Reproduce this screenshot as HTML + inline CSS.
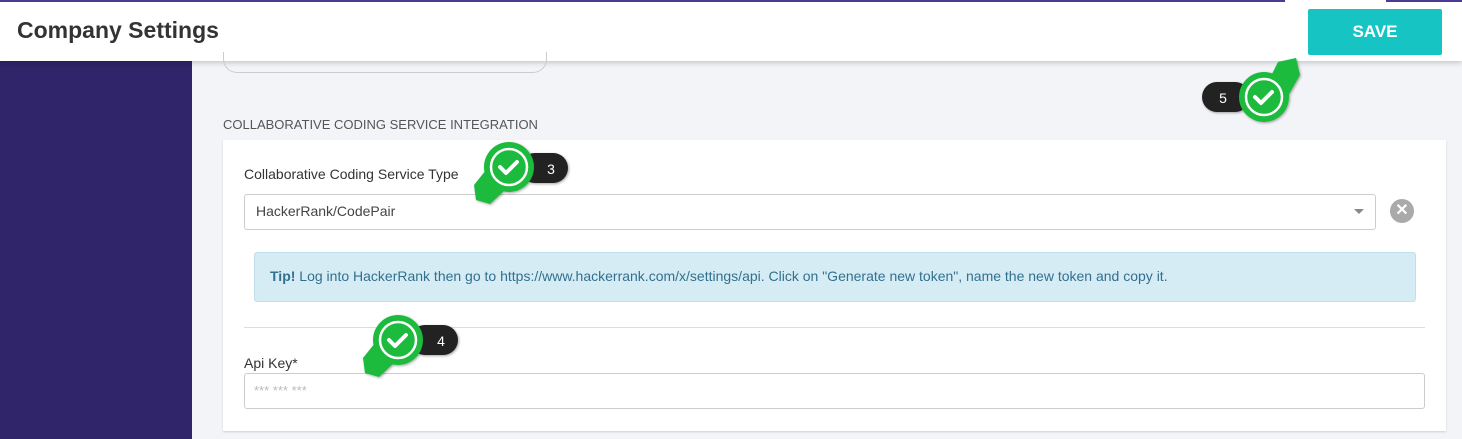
<!DOCTYPE html>
<html><head><meta charset="utf-8"><style>
body{margin:0;width:1462px;height:439px;overflow:hidden;background:#f3f4f8;font-family:"Liberation Sans",sans-serif;position:relative}
.abs{position:absolute}
</style></head><body>
<div class="abs" style="left:192px;top:61px;width:1270px;height:378px;background:#f3f4f8"></div>
<div class="abs" style="left:0;top:61px;width:192px;height:378px;background:#30246a"></div>
<div class="abs" style="left:0;top:0;width:1462px;height:61px;background:#fff;box-shadow:0 2px 5px rgba(0,0,0,.18)"></div>
<div class="abs" style="left:0;top:0;width:1285px;height:2px;background:#4b3a94"></div>
<div class="abs" style="left:1386px;top:0;width:76px;height:2px;background:#4b3a94"></div>
<div class="abs" style="left:17px;top:17px;font-size:23px;font-weight:bold;color:#333">Company Settings</div>
<div class="abs" style="left:1308px;top:9px;width:134px;height:46px;background:#17c4c4;border-radius:2px;color:#fff;font-weight:bold;font-size:17px;text-align:center;line-height:46px">SAVE</div>
<div class="abs" style="left:223px;top:52px;width:322px;height:20px;border:1px solid #ccc;border-top:none;border-radius:0 0 14px 14px"></div>
<div class="abs" style="left:223px;top:117px;font-size:13px;color:#555">COLLABORATIVE CODING SERVICE INTEGRATION</div>
<div class="abs" style="left:223px;top:140px;width:1223px;height:291px;background:#fff;box-shadow:0 1px 2px rgba(0,0,0,.15)"></div>
<div class="abs" style="left:244px;top:166px;font-size:14px;color:#333">Collaborative Coding Service Type</div>
<div class="abs" style="left:244px;top:194px;width:1130px;height:34px;border:1px solid #ccc;border-radius:3px;background:#fff"></div>
<div class="abs" style="left:256px;top:203px;font-size:14px;color:#444">HackerRank/CodePair</div>
<div class="abs" style="left:1354px;top:209px;width:0;height:0;border-left:5px solid transparent;border-right:5px solid transparent;border-top:5px solid #888"></div>
<div class="abs" style="left:1390px;top:199px;width:24px;height:24px;border-radius:50%;background:#aaa;color:#fff;font-size:16px;font-weight:bold;text-align:center;line-height:24px">✕</div>
<div class="abs" style="left:254px;top:252px;width:1160px;height:48px;background:#d6ecf4;border:1px solid #bfe0ea;border-radius:3px"></div>
<div class="abs" style="left:270px;top:268px;font-size:14px;color:#31708f;white-space:nowrap"><b>Tip!</b> Log into HackerRank then go to https://www.hackerrank.com/x/settings/api. Click on "Generate new token", name the new token and copy it.</div>
<div class="abs" style="left:244px;top:327px;width:1181px;height:1px;background:#ddd"></div>
<div class="abs" style="left:244px;top:355px;font-size:14px;color:#333">Api Key*</div>
<div class="abs" style="left:244px;top:373px;width:1179px;height:34px;border:1px solid #ccc;border-radius:3px;background:#fff"></div>
<div class="abs" style="left:254px;top:383px;font-size:13px;color:#bbb">*** *** ***</div>

<svg class="abs" style="left:0;top:0" width="1462" height="439">
<defs><filter id="s"><feDropShadow dx="1" dy="1" stdDeviation="1.2" flood-opacity=".35"/></filter></defs>
<g filter="url(#s)">
<rect x="520" y="153" width="48" height="30" rx="15" fill="#222"/>
<text x="551" y="174" font-size="14" fill="#fff" text-anchor="middle" font-family="Liberation Sans">3</text>
<polygon points="486,170 474,185 476,200 490,204 505,190" fill="#1fba3e"/>
<circle cx="509" cy="167" r="25" fill="#1fba3e"/>
<circle cx="509" cy="167" r="18" fill="#1fba3e" stroke="#fff" stroke-width="2.5"/>
<path d="M500 167 l6 6 l11 -11" stroke="#fff" stroke-width="4" fill="none" stroke-linecap="round" stroke-linejoin="round"/>

<rect x="410" y="325" width="48" height="30" rx="15" fill="#222"/>
<text x="441" y="346" font-size="14" fill="#fff" text-anchor="middle" font-family="Liberation Sans">4</text>
<polygon points="375,343 363,358 365,373 379,377 394,363" fill="#1fba3e"/>
<circle cx="398" cy="340" r="25" fill="#1fba3e"/>
<circle cx="398" cy="340" r="18" fill="#1fba3e" stroke="#fff" stroke-width="2.5"/>
<path d="M389 340 l6 6 l11 -11" stroke="#fff" stroke-width="4" fill="none" stroke-linecap="round" stroke-linejoin="round"/>

<rect x="1202" y="82" width="48" height="30" rx="15" fill="#222"/>
<text x="1223" y="103" font-size="14" fill="#fff" text-anchor="middle" font-family="Liberation Sans">5</text>
<polygon points="1270,78 1278,62 1296,58 1300,75 1288,96" fill="#1fba3e"/>
<circle cx="1264" cy="97" r="25" fill="#1fba3e"/>
<circle cx="1264" cy="97" r="18" fill="#1fba3e" stroke="#fff" stroke-width="2.5"/>
<path d="M1255 97 l6 6 l11 -11" stroke="#fff" stroke-width="4" fill="none" stroke-linecap="round" stroke-linejoin="round"/>
</g>
</svg>
</body></html>
